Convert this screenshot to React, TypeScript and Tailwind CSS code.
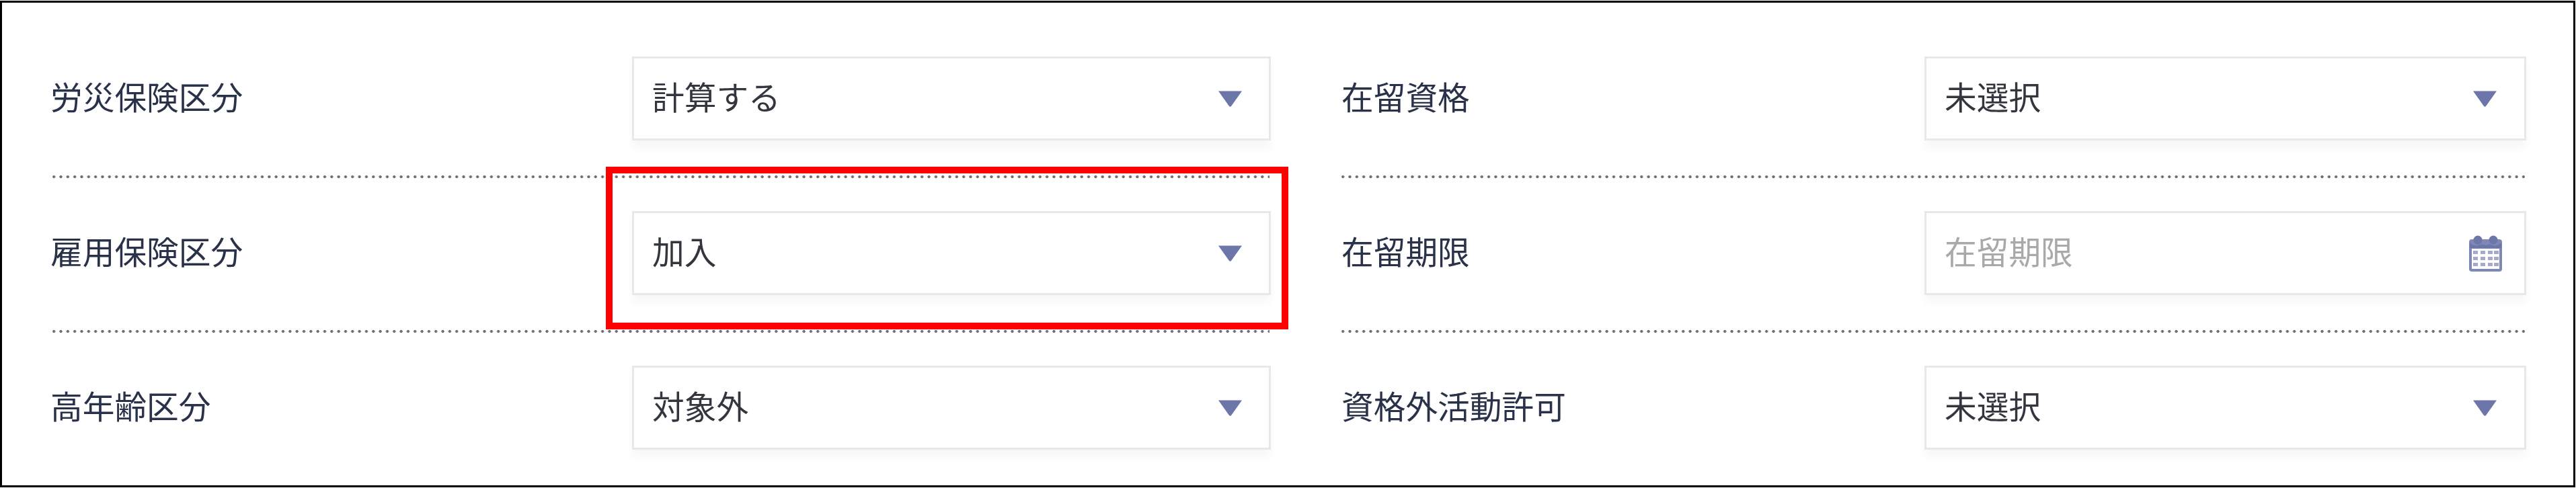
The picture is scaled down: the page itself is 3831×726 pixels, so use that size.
import * as React from "react";

const Caret = () => (
  <svg viewBox="0 0 35 24" className="w-[35px] h-[24px] shrink-0">
    <path d="M0 0.5 H35 L19 23 Q17.5 24.5 16 23 Z" fill="#6c76a8" />
  </svg>
);

const CalendarIcon = () => (
  <svg viewBox="0 0 49 54" className="w-[49px] h-[54px] shrink-0">
    <path d="M4 6 H45 Q49 6 49 10 V50 Q49 54 45 54 H4 Q0 54 0 50 V10 Q0 6 4 6 Z" fill="#7f88b5" />
    <circle cx="13" cy="7" r="6.5" fill="#6c76a8" />
    <circle cx="36" cy="7" r="6.5" fill="#6c76a8" />
    <path d="M1 11 Q7 17 13 15 Q19 12 25 15 Q31 12 36 15 Q42 17 48 11 V19 H1 Z" fill="#6c76a8" />
    <rect x="4" y="20" width="41" height="30" fill="#ffffff" />
    {[23, 32, 41].map((y) =>
      [6, 17, 28, 37].map((x) => (
        <rect key={`${x}-${y}`} x={x} y={y} width="7" height="5" fill="#a4aacb" />
      ))
    )}
  </svg>
);

const Field = ({
  value,
  placeholder,
  icon,
  className,
}: {
  value: string;
  placeholder?: boolean;
  icon: React.ReactNode;
  className: string;
}) => (
  <div
    className={`h-[125px] shrink-0 bg-white border-[3px] border-[#e8e8ea] shadow-[0_12px_12px_rgba(0,0,0,0.03)] flex items-center justify-between pl-[27px] ${className}`}
  >
    <span className={`pb-[8px] ${placeholder ? "text-[#a9a9ab]" : "text-[#33363e]"}`}>{value}</span>
    {icon}
  </div>
);

const Row = ({ label, children }: { label: string; children: React.ReactNode }) => (
  <div className="flex items-center justify-between">
    <span className="pb-[8px] text-[#2a3249]">{label}</span>
    {children}
  </div>
);

const Dots = ({ className }: { className: string }) => (
  <div
    className={`mt-[52px] mb-[49px] h-[4px] bg-[radial-gradient(circle,#6f7077_1.8px,transparent_2.4px)] bg-[length:10.33px_4px] bg-[position:-3px_0] ${className}`}
  ></div>
);

export default function App() {
  return (
    <div className="relative w-[3831px] h-[726px] bg-white pt-[1px] pr-[1px] pb-[1px]">
      <div
        className="w-full h-full border-[3px] border-black pt-[80px] pl-[72px] pr-[70px] flex justify-between text-[47.7px] leading-none"
        style={{ fontFamily: '"Noto Sans CJK JP", sans-serif' }}
      >
        <div className="w-[1815px] blur-[0.6px]">
          <Row label="労災保険区分">
            <Field value="計算する" className="w-[950px] pr-[40px]" icon={<Caret />} />
          </Row>
          <Dots className="ml-[3px] mr-[2px]" />
          <Row label="雇用保険区分">
            <Field value="加入" className="w-[950px] pr-[40px]" icon={<Caret />} />
          </Row>
          <Dots className="ml-[3px] mr-[2px]" />
          <Row label="高年齢区分">
            <Field value="対象外" className="w-[950px] pr-[40px]" icon={<Caret />} />
          </Row>
        </div>
        <div className="w-[1762px] blur-[0.6px]">
          <Row label="在留資格">
            <Field value="未選択" className="w-[895px] pr-[41px]" icon={<Caret />} />
          </Row>
          <Dots className="mr-[2px]" />
          <Row label="在留期限">
            <Field
              value="在留期限"
              placeholder
              className="w-[895px] pr-[33px]"
              icon={<CalendarIcon />}
            />
          </Row>
          <Dots className="mr-[2px]" />
          <Row label="資格外活動許可">
            <Field value="未選択" className="w-[895px] pr-[41px]" icon={<Caret />} />
          </Row>
        </div>
      </div>
      <div className="absolute left-[901px] top-[248px] w-[1015px] h-[242px] border-[10px] border-[#ff0000]"></div>
    </div>
  );
}
